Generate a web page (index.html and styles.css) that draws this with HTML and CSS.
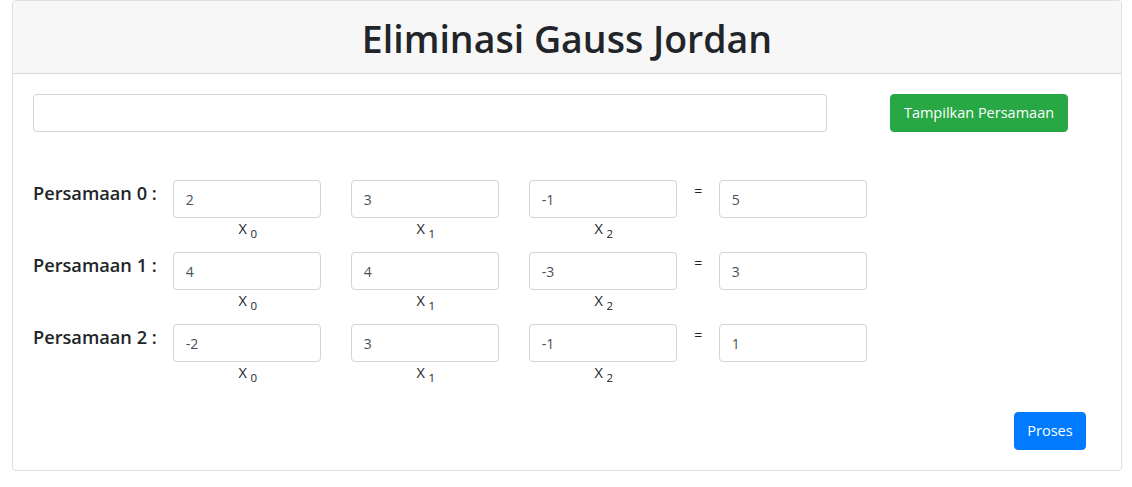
FILE: index.html
```html
<!DOCTYPE html>
<html lang="id">
<head>
<meta charset="utf-8">
<title>Eliminasi Gauss Jordan</title>
<link rel="stylesheet" href="styles.css">
</head>
<body>
<div class="card">
  <div class="card-header">
    <h1 class="title">Eliminasi Gauss Jordan</h1>
  </div>
  <div class="card-body">
    <div class="top-row">
      <input class="form-control input-count" type="text" value="">
      <button class="btn btn-success btn-show" type="button">Tampilkan Persamaan</button>
    </div>

    <div class="eq-list">
      <div class="eq-row">
        <label class="eq-label">Persamaan 0 :</label>
        <div class="var"><input class="form-control" type="text" value="2"><div class="var-name">X <sub>0</sub></div></div>
        <div class="var"><input class="form-control" type="text" value="3"><div class="var-name">X <sub>1</sub></div></div>
        <div class="var last"><input class="form-control" type="text" value="-1"><div class="var-name">X <sub>2</sub></div></div>
        <span class="equals">=</span>
        <div class="var result"><input class="form-control" type="text" value="5"></div>
      </div>
      <div class="eq-row">
        <label class="eq-label">Persamaan 1 :</label>
        <div class="var"><input class="form-control" type="text" value="4"><div class="var-name">X <sub>0</sub></div></div>
        <div class="var"><input class="form-control" type="text" value="4"><div class="var-name">X <sub>1</sub></div></div>
        <div class="var last"><input class="form-control" type="text" value="-3"><div class="var-name">X <sub>2</sub></div></div>
        <span class="equals">=</span>
        <div class="var result"><input class="form-control" type="text" value="3"></div>
      </div>
      <div class="eq-row">
        <label class="eq-label">Persamaan 2 :</label>
        <div class="var"><input class="form-control" type="text" value="-2"><div class="var-name">X <sub>0</sub></div></div>
        <div class="var"><input class="form-control" type="text" value="3"><div class="var-name">X <sub>1</sub></div></div>
        <div class="var last"><input class="form-control" type="text" value="-1"><div class="var-name">X <sub>2</sub></div></div>
        <span class="equals">=</span>
        <div class="var result"><input class="form-control" type="text" value="1"></div>
      </div>
    </div>

    <div class="actions">
      <button class="btn btn-primary btn-process" type="button">Proses</button>
    </div>
  </div>
</div>
</body>
</html>
```

FILE: styles.css
```css
* { box-sizing: border-box; }

html, body {
  margin: 0;
  padding: 0;
  background: #fff;
}

body {
  font-family: "Open Sans", "Noto Sans", sans-serif;
  color: #212529;
  font-size: 16px;
  line-height: 1.5;
}

.card {
  margin-left: 12px;
  width: 1110px;
  height: 471px;
  border: 1px solid rgba(0, 0, 0, 0.125);
  border-radius: 4px;
  display: flex;
  flex-direction: column;
}

.card-header {
  height: 73px;
  background: #f7f7f7;
  border-bottom: 1px solid rgba(0, 0, 0, 0.125);
  border-radius: 3px 3px 0 0;
  display: flex;
  align-items: center;
  justify-content: center;
}

.title {
  margin: 0;
  font-size: 37.5px;
  font-weight: 600;
  line-height: 1.2;
  padding-top: 2px;
}

.card-body {
  padding: 20px;
  flex: 1;
  display: flex;
  flex-direction: column;
}

.top-row {
  display: flex;
  align-items: center;
}

.form-control {
  display: block;
  height: 38px;
  padding: 6px 12px;
  font-family: inherit;
  font-size: 14px;
  color: #495057;
  background: #fff;
  border: 1px solid #ced4da;
  border-radius: 4px;
  outline: none;
}

.input-count {
  width: 794px;
  margin-right: 63px;
}

.btn {
  height: 38px;
  padding: 6px 0;
  font-family: inherit;
  font-size: 14.5px;
  line-height: 1.5;
  color: #fff;
  border: 1px solid transparent;
  border-radius: 4px;
  text-align: center;
  cursor: pointer;
}

.btn-success {
  background: #28a745;
  border-color: #28a745;
}

.btn-primary {
  background: #007bff;
  border-color: #007bff;
}

.btn-show { width: 178px; }
.btn-process { width: 72px; }

.eq-list {
  margin-top: 48px;
  display: flex;
  flex-direction: column;
  gap: 13px;
}

.eq-row {
  display: flex;
  align-items: flex-start;
}

.eq-label {
  font-size: 18.2px;
  font-weight: 600;
  line-height: 27px;
  margin-right: 16px;
  white-space: nowrap;
}

.var {
  width: 148px;
  margin-right: 30px;
  display: flex;
  flex-direction: column;
  align-items: stretch;
}

.var .form-control { width: 148px; }

.var-name {
  text-align: center;
  font-size: 14.5px;
  line-height: 21px;
  height: 21px;
  padding-left: 2px;
}

.var-name sub {
  font-size: 11.5px;
  line-height: 0;
  vertical-align: -4px;
}

.var.last { margin-right: 17px; }
.var.result { margin-right: 0; }

.equals {
  font-size: 14px;
  line-height: 22px;
  width: 9px;
  margin-right: 16px;
  text-align: center;
}

.actions {
  margin-top: auto;
  display: flex;
  justify-content: flex-end;
  padding-right: 15px;
}
```
